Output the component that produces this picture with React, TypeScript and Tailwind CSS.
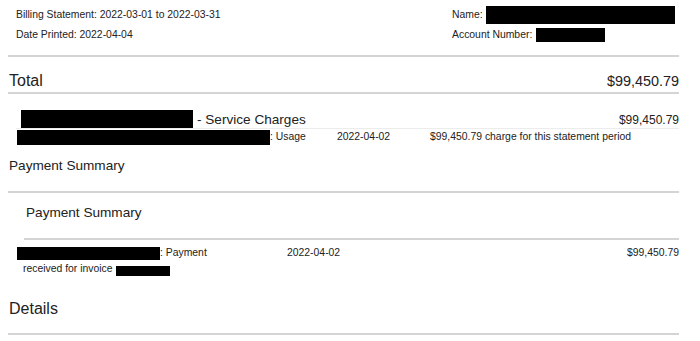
import React from 'react'

const Redact = ({ className }: { className: string }) => (
  <span className={`inline-block bg-black shrink-0 ${className}`} />
)

export default function App() {
  return (
    <div className="w-[700px] h-[341px] overflow-hidden bg-white text-[#222] font-['Liberation_Sans',Arial,sans-serif]">
      <div className="ml-2 w-[671px]">
        {/* Header */}
        <div className="h-[57px] pt-[5px] pb-[10px] px-2 pr-1 flex justify-between border-b-2 border-[#d4d4d4] text-[10.4px] leading-[20px]">
          <div>
            <div>Billing Statement: 2022-03-01 to 2022-03-31</div>
            <div>Date Printed: 2022-04-04</div>
          </div>
          <div className="w-[223px]">
            <div className="flex items-center h-[20px]">
              <span>Name:</span>
              <Redact className="ml-[3px] w-[189px] h-[18px]" />
            </div>
            <div className="flex items-center h-[20px]">
              <span>Account Number:</span>
              <Redact className="ml-[4px] w-[69px] h-[14px] -mt-[1px]" />
            </div>
          </div>
        </div>

        {/* Total */}
        <div className="h-[37px] pt-[14px] pl-[1px] flex items-baseline justify-between border-b-2 border-[#d4d4d4] leading-[20px]">
          <span className="text-[16px]">Total</span>
          <span className="text-[14.4px]">$99,450.79</span>
        </div>

        {/* Service charges */}
        <div className="mt-4 h-[18px] flex items-center">
          <Redact className="ml-[13px] w-[172px] h-[18px]" />
          <span className="ml-1 mt-[2px] text-[13.6px] leading-[18px]">- Service Charges</span>
          <span className="ml-auto mt-[2px] text-[12px] leading-[18px]">$99,450.79</span>
        </div>
        <div className="ml-2 border-t border-[#ececec] flex text-[10.4px] leading-[16px] h-[17px]">
          <div className="w-[321px] flex items-start">
            <Redact className="ml-[1px] mt-[1px] w-[253px] h-[15px]" />
            <span>: Usage</span>
          </div>
          <div className="w-[93px]">2022-04-02</div>
          <div>$99,450.79 charge for this statement period</div>
        </div>

        {/* Payment summary */}
        <div className="pt-[10px] pb-[15px] pl-[1px] text-[13.6px] leading-[21px] border-b-2 border-[#d4d4d4]">
          Payment Summary
        </div>
        <div className="ml-4 pt-[9px] pb-[15px] pl-[2px] text-[13.6px] leading-[21px] border-b-2 border-[#d4d4d4]">
          Payment Summary
        </div>
        <div className="pt-[5px] flex text-[10.4px] leading-[16px]">
          <div className="w-[279px] pl-[15px]">
            <div className="flex items-center h-[16px]">
              <Redact className="-ml-[6px] w-[143px] h-[13px] mt-[1px]" />
              <span>: Payment</span>
            </div>
            <div className="flex items-center h-[16px]">
              <span>received for invoice</span>
              <Redact className="ml-[3px] w-[54px] h-[10px] mt-[3px]" />
            </div>
          </div>
          <div>2022-04-02</div>
          <div className="ml-auto">$99,450.79</div>
        </div>

        {/* Details */}
        <div className="pt-[22px] pb-[14px] pl-[1px] text-[16px] leading-[20px] border-b-2 border-[#d4d4d4]">
          Details
        </div>
      </div>
    </div>
  )
}
